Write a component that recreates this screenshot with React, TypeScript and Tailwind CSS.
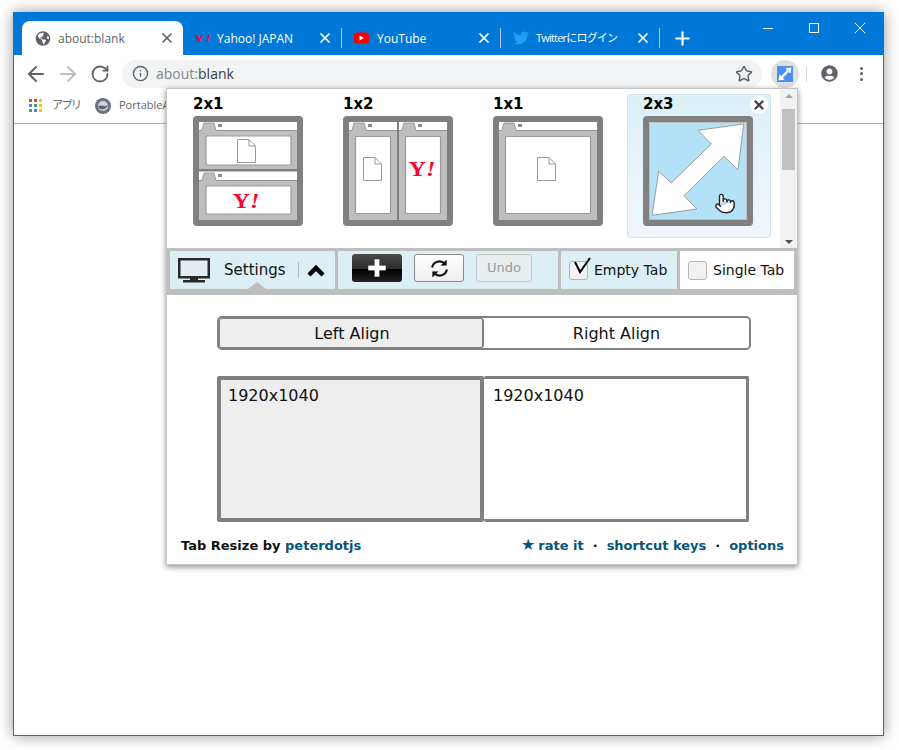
import { ArrowLeft, ArrowRight, Info, Plus, Pointer, RotateCw, Star, X } from "lucide-react";
import { FaGlobeAmericas, FaTwitter, FaUserCircle } from "react-icons/fa";

const uiFont = "font-['Open_Sans','Noto_Sans_CJK_JP',sans-serif]";
const popupFont = "font-['DejaVu_Sans',sans-serif]";

function Favicon({ kind }: { kind: string }) {
    if (kind === "globe") return <FaGlobeAmericas className="w-[16px] h-[15px] text-[#5f6368]" />;
    if (kind === "yahoo")
        return (
            <span className="font-['Liberation_Serif',serif] font-bold text-[11px] leading-none text-[#ff0033] w-[17px] ml-[-3px] whitespace-nowrap">
                <span className="inline-block origin-left scale-x-150">
                    Y<span className="italic">!</span>
                </span>
            </span>
        );
    if (kind === "youtube")
        return (
            <svg width="16" height="16" viewBox="0 0 16 16">
                <rect x="0" y="2.5" width="15" height="11" rx="3" fill="#ff0000" />
                <path d="M5.5 5.5 L10 8 L5.5 10.5 Z" fill="#fff" />
            </svg>
        );
    return <FaTwitter className="w-[16px] h-[16px] text-[#1da1f2]" />;
}

function Tab({ title, icon, width, active, divider, tight }: { title: string; icon: string; width: string; active?: boolean; divider?: boolean; tight?: boolean }) {
    return (
        <div className={`${width} h-[34px] flex items-center pl-[13px] pr-[8px] gap-[7px] relative ${tight ? "text-[11px]" : "text-[12px]"} ${active ? "bg-white rounded-t-[8px] text-[#5f6368]" : "text-white"}`}>
            <Favicon kind={icon} />
            <span className={`flex-1 pt-[1px] whitespace-nowrap ${tight ? "tracking-[-0.8px]" : ""}`}>{title}</span>
            <X className="w-[16px] h-[16px]" strokeWidth={2.6} />
            {divider && <div className="absolute right-[-1px] top-[7px] h-[20px] w-px bg-[#a8cdee]" />}
        </div>
    );
}

function FileIcon({ x, y }: { x: number; y: number }) {
    return (
        <path
            transform={`translate(${x} ${y})`}
            d="M0.5 0.5 H12 L18.5 7 V23.5 H0.5 Z M12 0.5 V7 H18.5"
            fill="#fff"
            stroke="#999"
            strokeWidth="1"
        />
    );
}

function YahooMark({ x, y }: { x: number; y: number }) {
    return (
        <text x={x} y={y} textAnchor="middle" textLength={27} lengthAdjust="spacingAndGlyphs" fontFamily="Liberation Serif" fontWeight="700" fontSize={21} fill="#ff0033">
            Y<tspan fontStyle="italic">!</tspan>
        </text>
    );
}

function Pane({ x, y, w }: { x: number; y: number; w: number }) {
    return (
        <g>
            <rect x={x} y={y} width={w} height={8} fill="#fff" />
            <path d={`M${x} ${y + 8.5} H${x + 3} L${x + 5} ${y + 1} H${x + 15} L${x + 17} ${y + 8.5} H${x + w}`} fill="#bebebe" stroke="#8a8a8a" strokeWidth="0.8" />
            <rect x={x + 19} y={y + 2} width="4" height="3" fill="#888" />
        </g>
    );
}

function Page({ x, y, w, h }: { x: number; y: number; w: number; h: number }) {
    return <rect x={x} y={y} width={w} height={h} rx="1" fill="#fff" stroke="#999" strokeWidth="1.2" />;
}

function Frame({ children }: { children: React.ReactNode }) {
    return (
        <svg width="110" height="110" viewBox="0 0 110 110" className="block">
            <rect width="110" height="110" rx="4" fill="#808080" />
            <rect x="6" y="6" width="98" height="98" fill="#bebebe" />
            {children}
        </svg>
    );
}

function Layout({ label, children, selected }: { label: string; children: React.ReactNode; selected?: boolean }) {
    return (
        <div className={`w-[144px] h-[144px] pl-[15px] rounded-[3px] border ${selected ? "bg-gradient-to-b from-[#dcf0f7] to-[#f1f6fd] border-[#cfe3f3]" : "border-transparent"}`}>
            <div className="text-[15px] leading-[18px] h-[21px] font-bold text-black">{label}</div>
            {children}
        </div>
    );
}

function Checkbox({ checked }: { checked?: boolean }) {
    return (
        <div className="relative w-[19px] h-[19px] rounded-[3px] border border-[#b5b5b5] bg-[#f1f1f1]">
            {checked && (
                <svg width="20" height="20" viewBox="0 0 20 20" className="absolute left-[4px] top-[-5px]">
                    <path d="M1 5 L6 15 L16 1" fill="none" stroke="#000" strokeWidth="2" />
                </svg>
            )}
        </div>
    );
}

function Popup() {
    return (
        <div className={`${popupFont} absolute left-[166px] top-[88px] w-[632px] h-[477px] bg-white border border-[#c4c4c4] shadow-[0_2px_6px_rgba(0,0,0,0.45)] text-[#111]`}>
            <div className="flex h-[159px]">
                <div className="flex-1 flex pl-[10px] pt-[5px] gap-[6px]">
                    <Layout label="2x1">
                        <Frame>
                            <Pane x={6} y={6} w={98} />
                            <Page x={13} y={20} w={85} h={29} />
                            <FileIcon x={44} y={23} />
                            <rect x="6" y="53" width="98" height="2" fill="#808080" />
                            <Pane x={6} y={56} w={98} />
                            <Page x={13} y={70} w={85} h={28} />
                            <YahooMark x={53} y={91.5} />
                        </Frame>
                    </Layout>
                    <Layout label="1x2">
                        <Frame>
                            <Pane x={6} y={6} w={48} />
                            <Pane x={56} y={6} w={48} />
                            <rect x="54" y="6" width="2" height="98" fill="#808080" />
                            <Page x={12.5} y={20.5} w={35} h={77} />
                            <Page x={62.5} y={20.5} w={35} h={77} />
                            <FileIcon x={20} y={41} />
                            <YahooMark x={79} y={60} />
                        </Frame>
                    </Layout>
                    <Layout label="1x1">
                        <Frame>
                            <Pane x={6} y={6} w={98} />
                            <Page x={12.5} y={20.5} w={85} h={77} />
                            <FileIcon x={44} y={41} />
                        </Frame>
                    </Layout>
                    <div className="relative">
                        <Layout label="2x3" selected>
                            <Frame>
                                <rect x="7" y="7" width="96" height="96" fill="#b3e1f7" />
                                <path d="M100.7 8 L55 14.3 L68.3 28 L28.3 67 L15.7 55.3 L9 99.3 L53.7 93 L41 79.7 L81 40.3 L95 53.7 Z" fill="#fff" stroke="#8a8a8a" strokeWidth="0.8" />
                                <Pointer x={71} y={75} width={22} height={25} fill="#fff" stroke="#222" strokeWidth={1.5} />
                            </Frame>
                        </Layout>
                        <div className="absolute right-[3px] top-[2px] w-[18px] h-[18px] rounded-full bg-white flex items-center justify-center">
                            <X className="w-[14px] h-[14px] text-[#444]" strokeWidth={4} />
                        </div>
                    </div>
                </div>
                <div className="w-[17px] bg-[#f1f1f1] flex flex-col items-center pt-[5px] pb-[4px]">
                    <div className="w-0 h-0 border-x-[4px] border-x-transparent border-b-[4px] border-b-[#a3a3a3]" />
                    <div className="w-[13px] h-[61px] bg-[#c1c1c1] mt-[11px]" />
                    <div className="flex-1" />
                    <div className="w-0 h-0 border-x-[4px] border-x-transparent border-t-[4px] border-t-[#505050]" />
                </div>
            </div>

            <div className="h-[47px] bg-[#bebebe] pt-[3px] pb-[6px] pl-[3px] pr-[3px] flex gap-[3px] text-[14px]">
                <div className="relative w-[165px] bg-[#dceff5] flex items-center pl-[8px]">
                    <svg width="32" height="25" viewBox="0 0 32 25" className="block">
                        <rect x="1.25" y="1.25" width="29.5" height="18" fill="#e6edf0" stroke="#2a2a2a" strokeWidth="2.5" />
                        <rect x="12" y="20" width="8" height="2.5" fill="#2a2a2a" />
                        <rect x="5" y="22" width="22" height="2.5" fill="#2a2a2a" />
                    </svg>
                    <span className="ml-[14px] text-[15px]">Settings</span>
                    <div className="w-px h-[16px] bg-[#b5b5b5] ml-[12px]" />
                    <svg width="18" height="13" viewBox="0 0 18 13" className="ml-[8px] block">
                        <path d="M2 11 L9 4 L16 11" fill="none" stroke="#000" strokeWidth="4.5" />
                    </svg>
                    <div className="absolute left-[78px] bottom-0 w-0 h-0 border-x-[9px] border-x-transparent border-b-[7px] border-b-[#bebebe]" />
                </div>
                <div className="w-[220px] bg-[#dceff5] flex items-start pt-[3px] pl-[14px] gap-[12px]">
                    <div className="w-[50px] h-[28px] rounded-[3px] bg-[linear-gradient(#4a4a4a,#2c2c2c_52%,#000_54%,#222)] flex items-center justify-center">
                        <Plus className="w-[30px] h-[30px] text-white" strokeWidth={3.8} strokeLinecap="butt" />
                    </div>
                    <div className="w-[50px] h-[28px] rounded-[3px] border border-[#8a8a8a] bg-gradient-to-b from-white to-[#eee] flex items-center justify-center">
                        <svg width="19" height="19" viewBox="0 0 18 18" fill="none" stroke="#111" strokeWidth="2">
                            <path d="M2 8 A7 7 0 0 1 14 4.5" />
                            <path d="M16 10 A7 7 0 0 1 4 13.5" />
                            <path d="M15.5 1 V6 H10.5 Z M2.5 17 V12 H7.5 Z" fill="#111" strokeWidth="0.5" />
                        </svg>
                    </div>
                    <div className="w-[56px] h-[28px] rounded-[3px] border border-[#c5c5c5] bg-[#e8eef0] flex items-center justify-center text-[13px] text-[#9a9a9a]">Undo</div>
                </div>
                <div className="w-[116px] bg-[#dceff5] flex items-center pl-[8px] gap-[6px]">
                    <Checkbox checked />
                    <span>Empty Tab</span>
                </div>
                <div className="flex-1 bg-white flex items-center pl-[8px] gap-[6px]">
                    <Checkbox />
                    <span>Single Tab</span>
                </div>
            </div>

            <div className="pt-[21px] pl-[50px] text-[16px]">
                <div className="w-[534px] h-[34px] flex rounded-[5px] border-2 border-[#808080] overflow-hidden">
                    <div className="w-[265px] pt-[1px] pl-[2px] bg-[#eeeeee] border border-r-2 border-[#808080] rounded-[3px] flex items-center justify-center">Left Align</div>
                    <div className="flex-1 pt-[1px] flex items-center justify-center">Right Align</div>
                </div>
                <div className="w-[532px] h-[146px] flex mt-[26px]">
                    <div className="w-[267px] bg-[#eeeeee] border-4 border-[#808080] rounded-[2px] pl-[7px] pt-[6px] leading-[20px]">1920x1040</div>
                    <div className="flex-1 border-[3px] border-l-0 border-[#808080] rounded-[2px] pl-[9px] pt-[7px] leading-[20px]">1920x1040</div>
                </div>
            </div>

            <div className="flex justify-between pl-[14px] pr-[13px] pt-[15px] text-[13px] leading-[18px] font-bold text-[#06547a]">
                <div>
                    <span className="text-[#111]">Tab Resize by </span>peterdotjs
                </div>
                <div className="flex gap-[9px]">
                    <span><span className="text-[16px] leading-[16px] mr-[3px]">★</span>rate it</span>
                    <span className="text-[#111]">·</span>
                    <span>shortcut keys</span>
                    <span className="text-[#111]">·</span>
                    <span>options</span>
                </div>
            </div>
        </div>
    );
}

export default function App() {
    return (
        <div className={`${uiFont} relative w-[899px] h-[750px] bg-white overflow-hidden pl-[13px] pt-[12px]`}>
            <div className="w-[871px] h-[724px] border border-[#0078d7] shadow-[0_0_14px_rgba(0,0,0,0.4)] bg-white flex flex-col">
                <div className="h-[42px] bg-[#0078d7] flex items-end pl-[8px] relative">
                    <Tab title="about:blank" icon="globe" width="w-[161px]" active />
                    <Tab title="Yahoo! JAPAN" icon="yahoo" width="w-[158px]" divider />
                    <Tab title="YouTube" icon="youtube" width="w-[159px]" divider />
                    <Tab title="Twitterにログイン" icon="twitter" width="w-[159px]" divider tight />
                    <Plus className="ml-[13px] mb-[6px] w-[21px] h-[21px] text-white" strokeWidth={2.5} />
                    <div className="flex-1" />
                    <div className="flex items-center self-start text-white h-[30px]">
                        <div className="w-[46px] flex justify-center"><div className="w-[10px] h-px bg-white" /></div>
                        <div className="w-[46px] flex justify-center"><div className="w-[10px] h-[10px] border border-white" /></div>
                        <div className="w-[46px] flex justify-center"><X className="w-[20px] h-[20px]" strokeWidth={1.1} /></div>
                    </div>
                </div>

                <div className="h-[37px] flex items-center pl-[10px] pr-[12px] text-[#5f6368]">
                    <ArrowLeft className="w-[24px] h-[24px]" strokeWidth={2} />
                    <ArrowRight className="w-[24px] h-[24px] ml-[8px] text-[#bdc1c6]" strokeWidth={2} />
                    <RotateCw className="w-[20px] h-[20px] ml-[10px]" strokeWidth={2.2} />
                    <div className="ml-[12px] w-[640px] h-[28px] rounded-full bg-[#f1f3f4] flex items-center pl-[10px] pr-[9px] text-[14px]">
                        <Info className="w-[17px] h-[17px]" strokeWidth={2} />
                        <span className="ml-[7px] text-[#80868b]">about:<span className="text-[#3c4043]">blank</span></span>
                        <div className="flex-1" />
                        <Star className="w-[18px] h-[18px]" strokeWidth={2} />
                    </div>
                    <div className="ml-[9px] w-[28px] h-[28px] rounded-full bg-[#e0e0e0] flex items-center justify-center">
                        <svg width="16" height="16" viewBox="0 0 16 16">
                            <rect width="16" height="16" fill="#4a90f0" />
                            <path d="M14.5 1.5 L8.5 2.5 L10 4.3 L4.3 10 L2.5 8.5 L1.5 14.5 L7.5 13.5 L6 11.7 L11.7 6 L13.5 7.5 Z" fill="#fff" />
                        </svg>
                    </div>
                    <div className="ml-[7px] w-px h-[16px] bg-[#d5d7da]" />
                    <FaUserCircle className="ml-[14px] w-[17px] h-[17px]" />
                    <div className="ml-[14px] flex flex-col gap-[2.5px] items-center w-[18px]">
                        <div className="w-[3px] h-[3px] rounded-full bg-[#5f6368]" />
                        <div className="w-[3px] h-[3px] rounded-full bg-[#5f6368]" />
                        <div className="w-[3px] h-[3px] rounded-full bg-[#5f6368]" />
                    </div>
                </div>

                <div className="h-[32px] pb-[4px] border-b border-[#b5b5b5] flex items-center pl-[15px] text-[11px] text-[#5f6368]">
                    <div className="grid grid-cols-3 gap-[2px] w-[13px]">
                        <i className="w-[3px] h-[3px] bg-[#ea4335]" />
                        <i className="w-[3px] h-[3px] bg-[#ea4335]" />
                        <i className="w-[3px] h-[3px] bg-[#fbbc05]" />
                        <i className="w-[3px] h-[3px] bg-[#4285f4]" />
                        <i className="w-[3px] h-[3px] bg-[#34a853]" />
                        <i className="w-[3px] h-[3px] bg-[#fbbc05]" />
                        <i className="w-[3px] h-[3px] bg-[#34a853]" />
                        <i className="w-[3px] h-[3px] bg-[#4285f4]" />
                        <i className="w-[3px] h-[3px] bg-[#fbbc05]" />
                    </div>
                    <span className="ml-[10px] w-[27px] tracking-[-1.5px] whitespace-nowrap">アプリ</span>
                    <svg width="16" height="16" viewBox="0 0 16 16" className="ml-[16px]">
                        <circle cx="8" cy="8" r="8" fill="#6b7280" />
                        <circle cx="8" cy="8" r="5" fill="#cbd5e1" />
                        <path d="M3 9 C6 5 10 11 13 6 C12 12 6 13 3 9 Z" fill="#5b6470" />
                    </svg>
                    <span className="ml-[8px]">PortableApps</span>
                </div>

                <div className="flex-1" />
            </div>
            <Popup />
        </div>
    );
}
